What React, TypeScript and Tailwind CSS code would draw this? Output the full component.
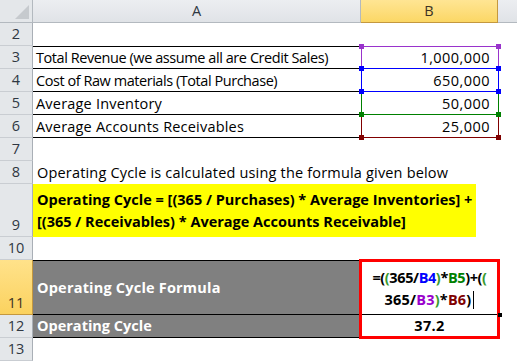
import React from 'react';

type Seg = [string, string];

const line1: Seg[] = [
  ['=(', 'text-black'],
  ['(', 'text-[#3a9a2e]'],
  ['365/', 'text-black'],
  ['B4', 'text-[#0000ff]'],
  [')', 'text-[#3a9a2e]'],
  ['*', 'text-black'],
  ['B5', 'text-[#008000]'],
  [')+(', 'text-black'],
  ['(', 'text-[#3a9a2e]'],
];

const line2: Seg[] = [
  ['365/', 'text-black'],
  ['B3', 'text-[#9900cc]'],
  [')', 'text-[#3a9a2e]'],
  ['*', 'text-black'],
  ['B6', 'text-[#800000]'],
  [')', 'text-black'],
];

// tracking per row: Open Sans proportions differ from the sheet's font
const ranges = [
  { label: 'Total Revenue (we assume all are Credit Sales)', track: 'tracking-[-0.43px]', value: '1,000,000', border: 'border-[#9933cc]', dot: 'bg-[#9933cc]', z: 'z-10', top: 'top-0 h-[23px]' },
  { label: 'Cost of Raw materials (Total Purchase)', track: 'tracking-[-0.45px]', value: '650,000', border: 'border-[#0000ff]', dot: 'bg-[#0000ff]', z: 'z-30', top: 'top-[-1px] h-[24px]' },
  { label: 'Average Inventory', track: 'tracking-[0.2px]', value: '50,000', border: 'border-[#008000]', dot: 'bg-[#008000]', z: 'z-20', top: 'top-[-1px] h-[24px]' },
  { label: 'Average Accounts Receivables', track: 'tracking-[0.2px]', value: '25,000', border: 'border-[#800000]', dot: 'bg-[#800000]', z: 'z-10', top: 'top-[-1px] h-[24px]' },
];

function RowNum({ n, active }: { n?: number; active?: boolean }) {
  if (active) {
    return (
      <div className="flex w-[33px] shrink-0 items-end justify-center border-r border-b border-r-[#c4983f] border-b-[#c4983f] bg-gradient-to-b from-[#ffe28a] to-[#fbd25e] leading-[22px] text-[#3b3225]">
        {n}
      </div>
    );
  }
  return (
    <div className="flex w-[33px] shrink-0 items-end justify-center border-r border-b border-r-[#a9afb6] border-b-[#c9cdd2] bg-[#e4e7ea] leading-[22px] text-[#2f3742]">
      {n}
    </div>
  );
}

function Corners({ dot }: { dot: string }) {
  return (
    <>
      <span className={`absolute left-[-3px] top-[-3px] h-[5px] w-[5px] ${dot}`} />
      <span className={`absolute right-[-3px] top-[-3px] h-[5px] w-[5px] ${dot}`} />
      <span className={`absolute left-[-3px] bottom-[-3px] h-[5px] w-[5px] ${dot}`} />
      <span className={`absolute right-[-3px] bottom-[-3px] h-[5px] w-[5px] ${dot}`} />
    </>
  );
}

export default function App() {
  return (
    <div className="relative h-[361px] w-[517px] overflow-hidden bg-white font-['Open_Sans',sans-serif] text-[14.5px] text-black">
      {/* column headers */}
      <div className="flex h-[23px]">
        <div className="relative w-[33px] shrink-0 border-r border-b border-[#b3b9bf] bg-[#e4e7ea]">
          <span className="absolute right-[3px] bottom-[3px] h-0 w-0 border-l-[14px] border-b-[14px] border-l-transparent border-b-[#c6cace]" />
        </div>
        <div className="flex w-[328px] shrink-0 items-center justify-center border-r border-b border-[#b3b9bf] bg-gradient-to-b from-[#eceef1] to-[#e0e3e7] text-[#2f3742]">
          A
        </div>
        <div className="flex w-[137px] shrink-0 items-center justify-center border-r border-b border-[#c4983f] bg-gradient-to-b from-[#ffe593] to-[#fbd764] text-[#3b3225]">
          B
        </div>
        <div className="flex-1 border-b border-[#b3b9bf] bg-gradient-to-b from-[#eceef1] to-[#e0e3e7]" />
      </div>

      {/* row 2 */}
      <div className="flex h-[23px]">
        <RowNum n={2} />
        <div className="flex-1" />
      </div>

      {/* rows 3-6 */}
      {ranges.map((r, i) => (
        <div key={r.label} className="flex h-[23px]">
          <RowNum n={i + 3} />
          <div
            className={
              i === 0
                ? `flex w-[328px] shrink-0 items-center whitespace-nowrap border-t border-b border-black pl-[3px] leading-[21px] ${r.track}`
                : `flex w-[328px] shrink-0 items-center whitespace-nowrap border-b border-black pl-[3px] leading-[21px] ${r.track}`
            }
          >
            {r.label}
          </div>
          <div className="relative flex w-[137px] shrink-0 items-center justify-end pr-[8px] leading-[21px] tracking-[0.45px]">
            {r.value}
            <div className={`absolute left-0 w-[138px] border ${r.top} ${r.border} ${r.z}`}>
              <Corners dot={r.dot} />
            </div>
          </div>
          <div className="flex-1" />
        </div>
      ))}

      {/* row 7 */}
      <div className="flex h-[23px]">
        <RowNum n={7} />
        <div className="flex-1" />
      </div>

      {/* row 8 */}
      <div className="flex h-[23px]">
        <RowNum n={8} />
        <div className="flex flex-1 items-center whitespace-nowrap pl-[4px] tracking-[0.18px]">
          Operating Cycle is calculated using the formula given below
        </div>
      </div>

      {/* row 9 */}
      <div className="flex h-[53px]">
        <RowNum n={9} />
        <div className="flex w-[443px] shrink-0 flex-col justify-center bg-[#ffff00] pl-[4px] font-bold leading-[22px] whitespace-nowrap">
          <span>Operating Cycle = [(365 / Purchases) * Average Inventories] +</span>
          <span>[(365 / Receivables) * Average Accounts Receivable]</span>
        </div>
        <div className="flex-1" />
      </div>

      {/* row 10 */}
      <div className="flex h-[23px]">
        <RowNum n={10} />
        <div className="flex-1" />
      </div>

      {/* row 11 */}
      <div className="flex h-[55px]">
        <RowNum n={11} active />
        <div className="flex w-[328px] shrink-0 items-center border-t border-b border-black bg-[#808080] pl-[4px] font-bold tracking-[0.2px] text-white">
          Operating Cycle Formula
        </div>
        <div className="relative flex w-[137px] shrink-0 flex-col items-center justify-center border-b border-black pt-[3px] font-bold leading-[22px]">
          <span className="whitespace-nowrap tracking-[-0.4px]">
            {line1.map(([t, c], i) => (
              <span key={i} className={c}>{t}</span>
            ))}
          </span>
          <span className="flex items-center whitespace-nowrap tracking-[0.2px]">
            {line2.map(([t, c], i) => (
              <span key={i} className={c}>{t}</span>
            ))}
            <span className="ml-[2px] inline-block h-[18px] w-px bg-black" />
          </span>
          <div className="absolute left-[-2px] top-[-1px] z-10 h-[80px] w-[141px] border-[3px] border-[#ff0000]" />
          <span className="absolute right-[-4px] bottom-[-3px] z-20 h-[4px] w-[4px] bg-black" />
        </div>
        <div className="flex-1" />
      </div>

      {/* row 12 */}
      <div className="flex h-[23px]">
        <RowNum n={12} />
        <div className="flex w-[328px] shrink-0 items-center border-b border-black bg-[#808080] pl-[4px] font-bold text-white">
          Operating Cycle
        </div>
        <div className="flex w-[137px] shrink-0 items-center justify-center border-b border-black font-bold tracking-[0.4px]">
          37.2
        </div>
        <div className="flex-1" />
      </div>

      {/* row 13 */}
      <div className="flex h-[23px]">
        <RowNum n={13} />
        <div className="flex-1" />
      </div>
    </div>
  );
}
